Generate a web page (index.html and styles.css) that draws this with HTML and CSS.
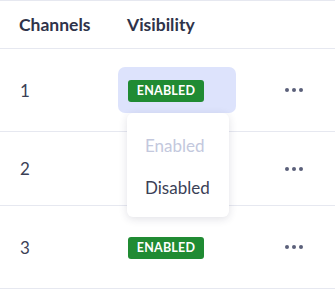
FILE: index.html
```html
<!DOCTYPE html>
<html lang="en">
<head>
  <meta charset="UTF-8">
  <title>Channels</title>
  <link rel="stylesheet" href="styles.css">
</head>
<body>
  <div class="table">
    <div class="row head">
      <div class="cell num">Channels</div>
      <div class="cell vis">Visibility</div>
      <div class="cell act"></div>
    </div>
    <div class="row tall">
      <div class="cell num">1</div>
      <div class="cell vis">
        <div class="picker open">
          <span class="badge">Enabled</span>
          <ul class="menu">
            <li class="muted">Enabled</li>
            <li>Disabled</li>
          </ul>
        </div>
      </div>
      <div class="cell act"><span class="dots"><i></i><i></i><i></i></span></div>
    </div>
    <div class="row">
      <div class="cell num">2</div>
      <div class="cell vis"></div>
      <div class="cell act"><span class="dots"><i></i><i></i><i></i></span></div>
    </div>
    <div class="row tall">
      <div class="cell num">3</div>
      <div class="cell vis">
        <div class="picker">
          <span class="badge">Enabled</span>
        </div>
      </div>
      <div class="cell act"><span class="dots"><i></i><i></i><i></i></span></div>
    </div>
  </div>
</body>
</html>
```

FILE: styles.css
```css
body {
  margin: 0;
  background: #fff;
  font-family: Lato, "Open Sans", sans-serif;
  color: #3b3f56;
}
.table {
  width: 335px;
  border-top: 1px solid #e6e8f0;
}
.row {
  display: grid;
  grid-template-columns: 118px 140px 1fr;
  align-items: center;
  height: 73px;
  border-bottom: 1px solid #e6e8f0;
}
.row.tall {
  height: 82px;
}
.row.head {
  height: 47px;
  font-weight: 700;
  color: #2f334a;
}
.cell.num {
  padding-left: 20px;
  font-size: 17px;
}
.head .cell {
  font-size: 17.5px;
}
.head .cell.num {
  padding-left: 19px;
}
.head .cell.vis {
  padding-left: 9px;
}
.cell.act {
  display: flex;
  justify-content: flex-end;
  padding-right: 32px;
}
.picker {
  position: relative;
  width: 118px;
  height: 46px;
  box-sizing: border-box;
  padding: 12px 10px;
  border-radius: 7px;
}
.picker.open {
  background: #dde3fc;
}
.badge {
  display: inline-block;
  width: 76px;
  height: 22px;
  line-height: 22px;
  border-radius: 3px;
  background: #208b33;
  color: #fff;
  font-size: 12.5px;
  font-weight: 700;
  letter-spacing: 0.2px;
  text-transform: uppercase;
  text-align: center;
}
.menu {
  position: absolute;
  top: 46px;
  left: 9px;
  width: 102px;
  margin: 0;
  padding: 12px 0 8px;
  list-style: none;
  background: #fff;
  border-radius: 6px;
  box-shadow: 0 2px 8px rgba(40, 45, 80, 0.14);
  z-index: 2;
}
.menu li {
  padding: 0 18px;
  height: 42px;
  line-height: 42px;
  font-size: 17px;
  color: #3b3f56;
}
.menu li.muted {
  color: #c3c8dd;
}
.dots {
  display: flex;
  gap: 3px;
}
.dots i {
  width: 4px;
  height: 4px;
  border-radius: 50%;
  background: #5b607a;
}
```
